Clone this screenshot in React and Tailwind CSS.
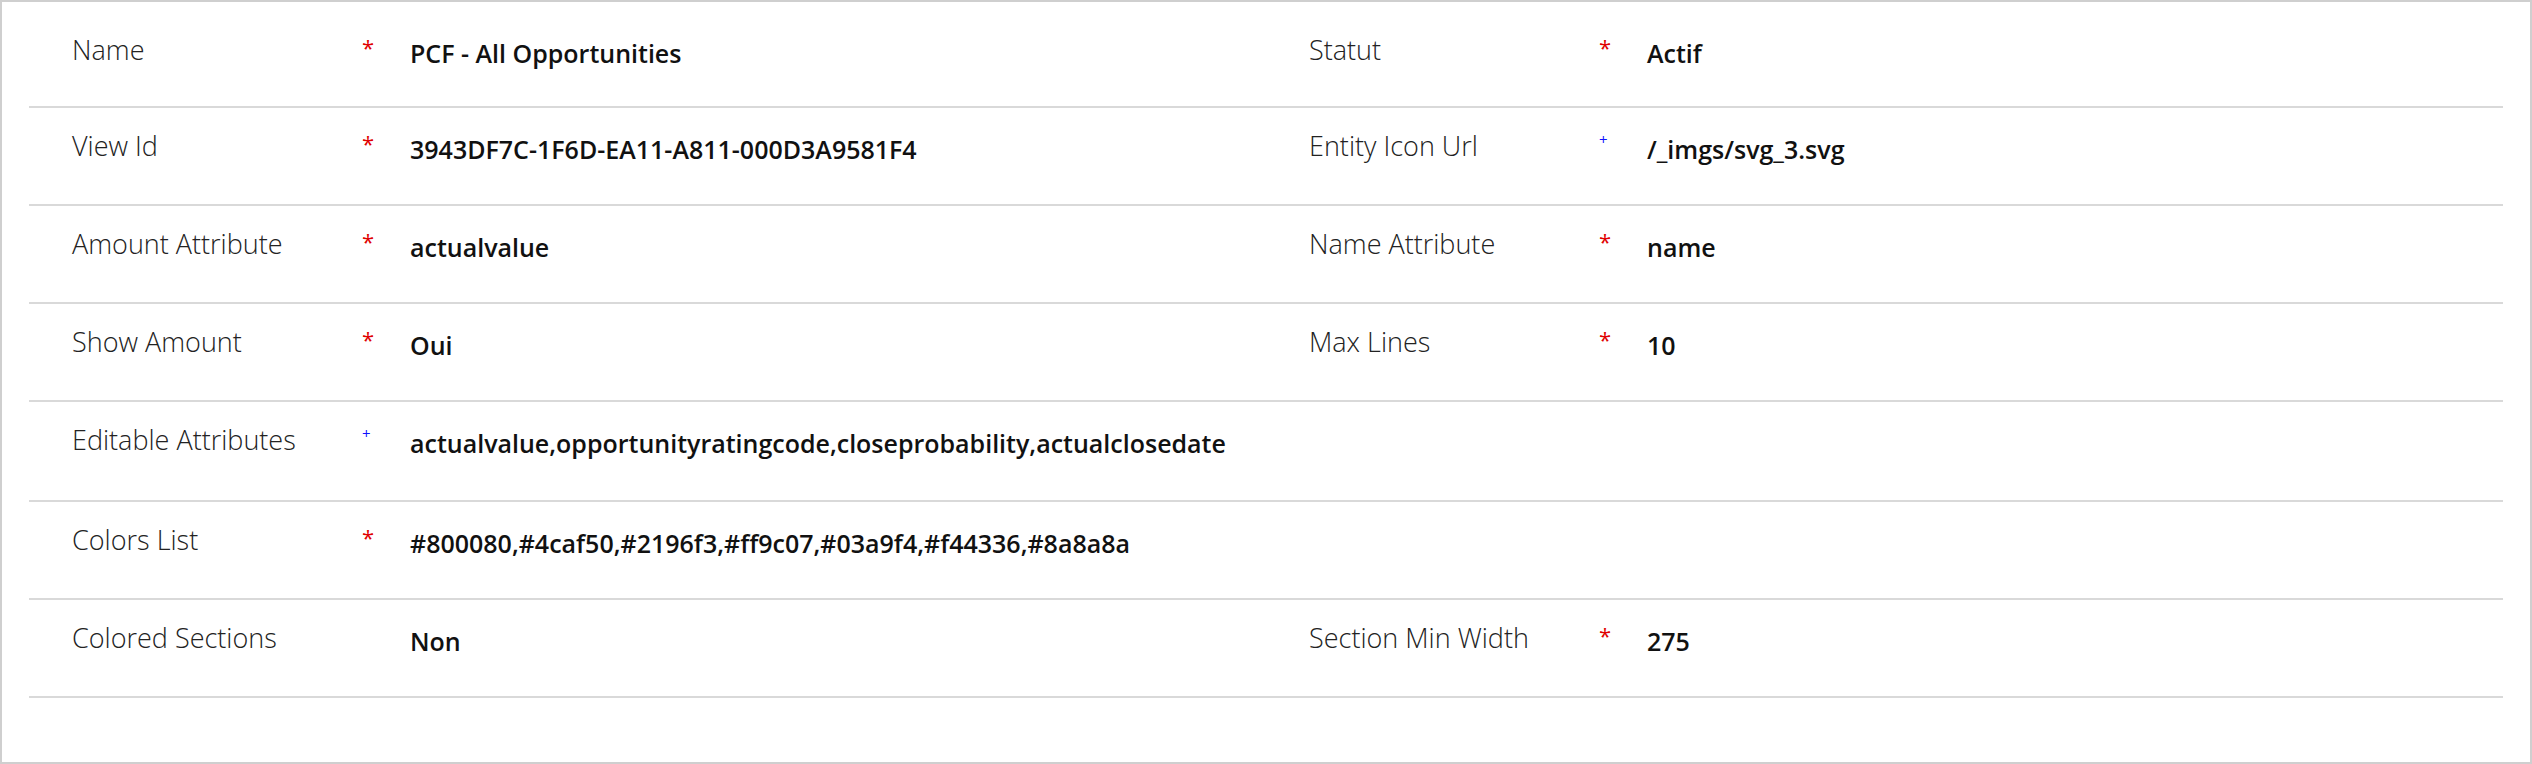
const rows = [
  [
    { label: "Name", req: "required", value: "PCF - All Opportunities" },
    { label: "Statut", req: "required", value: "Actif" },
  ],
  [
    { label: "View Id", req: "required", value: "3943DF7C-1F6D-EA11-A811-000D3A9581F4" },
    { label: "Entity Icon Url", req: "recommended", value: "/_imgs/svg_3.svg" },
  ],
  [
    { label: "Amount Attribute", req: "required", value: "actualvalue" },
    { label: "Name Attribute", req: "required", value: "name" },
  ],
  [
    { label: "Show Amount", req: "required", value: "Oui" },
    { label: "Max Lines", req: "required", value: "10" },
  ],
  [
    {
      label: "Editable Attributes",
      req: "recommended",
      value: "actualvalue,opportunityratingcode,closeprobability,actualclosedate",
    },
    null,
  ],
  [
    {
      label: "Colors List",
      req: "required",
      value: "#800080,#4caf50,#2196f3,#ff9c07,#03a9f4,#f44336,#8a8a8a",
    },
    null,
  ],
  [
    { label: "Colored Sections", req: null, value: "Non" },
    { label: "Section Min Width", req: "required", value: "275" },
  ],
];

function Marker({ req }) {
  if (req === "required") {
    return <span className="block pt-[6px] text-[22px] leading-none text-[#e00000]">*</span>;
  }
  if (req === "recommended") {
    return <span className="block pt-[6px] text-[15px] leading-none text-[#1010ff]">+</span>;
  }
  return null;
}

function Field({ field }) {
  if (!field) return <div className="flex-1" />;
  return (
    <div className="flex flex-1 items-start pl-[43px] pt-[18px]">
      <div className="w-[290px] shrink-0 text-[27px] font-light text-[#222]">
        {field.label}
      </div>
      <div className="w-[48px] shrink-0">
        <Marker req={field.req} />
      </div>
      <div className="pt-[5px] text-[25px] font-semibold text-[#111] whitespace-nowrap">
        {field.value}
      </div>
    </div>
  );
}

export default function App() {
  return (
    <div
      className="w-[2532px] h-[764px] border-2 border-[#cfcfcf] bg-white px-[27px] pt-[10px]"
      style={{ fontFamily: "'Open Sans', 'Noto Sans', sans-serif" }}
    >
      {rows.map((row, i) => (
        <div
          key={i}
          className={`flex border-b-2 border-[#d9d9d9] ${i === 4 ? "h-[100px]" : i === 0 ? "h-[96px]" : "h-[98px]"}`}
        >
          <Field field={row[0]} />
          <Field field={row[1]} />
        </div>
      ))}
    </div>
  );
}
